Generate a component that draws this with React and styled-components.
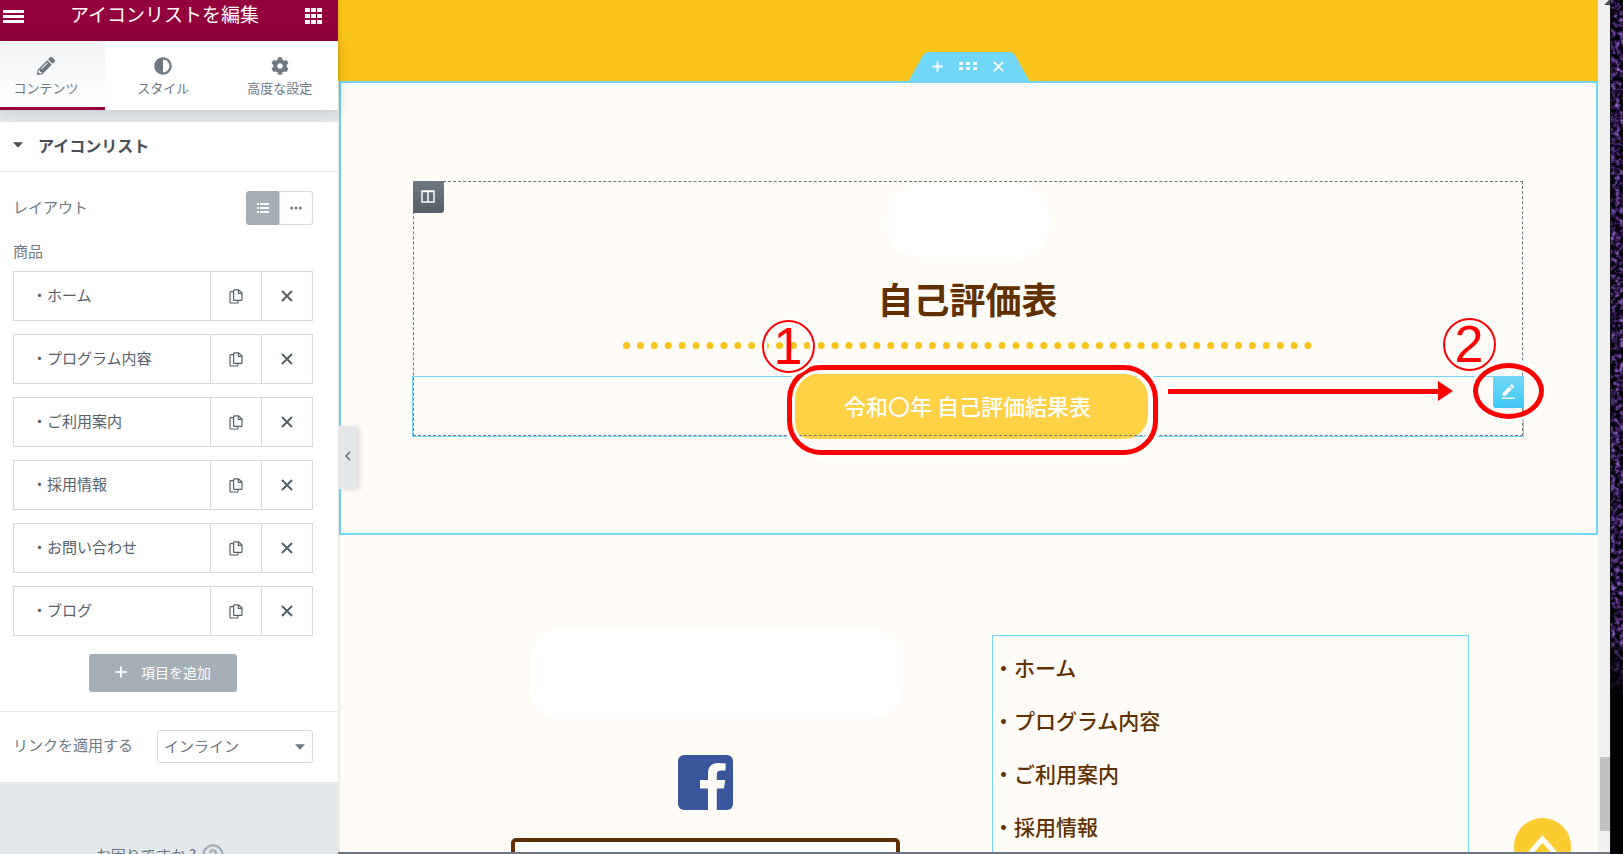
import React from 'react';
import styled, { createGlobalStyle } from 'styled-components';
import { FaPencilAlt, FaAdjust, FaCog } from 'react-icons/fa';


const GlobalStyle = createGlobalStyle`
  * {
    box-sizing: border-box;
  }
  body {
    margin: 0;
    overflow: hidden;
    font-family: "Noto Sans CJK JP", "Noto Sans", sans-serif;
  }
  button, select {
    font-family: inherit;
    padding: 0;
    border: 0;
    background: none;
    cursor: pointer;
  }
  svg {
    display: block;
  }
`;

const Page = styled.div`
  display: flex;
  height: 100vh;
  overflow: hidden;
`;

/* ---------- left panel ---------- */

const Panel = styled.aside`
  position: relative;
  z-index: 2;
  flex: 0 0 338px;
  display: flex;
  flex-direction: column;
  background: #e4e8eb;
  color: #6d7882;
  box-shadow: 0 0 4px rgba(0, 0, 0, 0.2);
`;

const PanelHeader = styled.header`
  flex: none;
  display: flex;
  align-items: flex-start;
  justify-content: space-between;
  height: 41px;
  padding: 0 15px 0 3px;
  background: #93003c;
  color: #fff;
  svg {
    margin-top: 8px;
  }
`;

const HeaderButton = styled.button`
  color: #fff;
`;

const PanelTitle = styled.h1`
  margin: 0;
  font-size: 19px;
  line-height: 28px;
  font-weight: 400;
`;

const Tabs = styled.nav`
  position: relative;
  flex: none;
  display: grid;
  grid-template-columns: 105px 1fr 1fr;
  height: 69px;
  background: #fff;
  box-shadow: 0 2px 14px rgba(0, 0, 0, 0.14);
`;

const Tab = styled.button`
  display: flex;
  flex-direction: column;
  align-items: center;
  gap: 3px;
  padding: 16px ${p => (p.$active ? '13px' : '0')} 0 0;
  border-bottom: ${p => (p.$active ? '3px solid #93003c' : '0')};
  background: ${p => (p.$active ? 'linear-gradient(#f1f3f5, #fff)' : '#fff')};
  color: #6d7882;
  font-size: 13px;
  line-height: 20px;
  font-weight: 400;
`;

const Section = styled.section`
  flex: none;
  margin-top: 12px;
  background: #fff;
`;

const SectionTitle = styled.h2`
  display: flex;
  align-items: center;
  gap: 15px;
  height: 50px;
  margin: 0;
  padding: 0 0 3px 13px;
  border-bottom: 1px solid #e6e9ec;
  color: #495157;
  font-size: 16px;
  font-weight: 700;
`;

const Control = styled.div`
  display: flex;
  align-items: center;
  justify-content: space-between;
  padding: ${p => p.$pad} 25px 0 13px;
  font-size: 15px;
  line-height: 22px;
  font-weight: 400;
  > span, > label {
    padding-bottom: 3px;
  }
`;

const Choices = styled.div`
  display: flex;
`;

const Choice = styled.button`
  display: flex;
  align-items: center;
  justify-content: center;
  width: ${p => (p.$on ? '33px' : '34px')};
  height: 34px;
  border: 1px solid ${p => (p.$on ? '#a4afb7' : '#d5dadf')};
  border-radius: ${p => (p.$on ? '3px 0 0 3px' : '0 3px 3px 0')};
  background: ${p => (p.$on ? '#a4afb7' : '#fff')};
  color: ${p => (p.$on ? '#fff' : '#6d7882')};
`;

const Items = styled.ul`
  display: flex;
  flex-direction: column;
  gap: 13px;
  margin: 9px 25px 0 13px;
  padding: 0;
  list-style: none;
`;

const Item = styled.li`
  display: grid;
  grid-template-columns: 1fr 51px 51px;
  height: 50px;
  border: 1px solid #d5dadf;
`;

const ItemTitle = styled.button`
  padding: 0 0 3px 18px;
  text-align: left;
  color: #556068;
  font-size: 15px;
  font-weight: 400;
`;

const ItemTool = styled.button`
  display: flex;
  align-items: center;
  justify-content: center;
  border-left: 1px solid #d5dadf;
  color: #556068;
`;

const AddButton = styled.button`
  display: flex;
  align-items: center;
  justify-content: center;
  gap: 14px;
  width: 148px;
  height: 38px;
  margin: 18px 0 19px 89px;
  padding-bottom: 2px;
  border-radius: 3px;
  background: #a4afb7;
  color: #fff;
  font-size: 14px;
`;

const Divided = styled.div`
  border-top: 1px solid #e6e9ec;
  padding-bottom: 19px;
`;

const SelectBox = styled.div`
  display: grid;
  align-items: center;
  width: 156px;
  select, svg {
    grid-area: 1 / 1;
  }
  svg {
    justify-self: end;
    margin-right: 8px;
    pointer-events: none;
  }
`;

const Select = styled.select`
  appearance: none;
  height: 33px;
  padding: 0 8px 3px 6px;
  border: 1px solid #d5dadf;
  border-radius: 3px;
  color: #6d7882;
  font-size: 15px;
  font-weight: 400;
`;

const Help = styled.a`
  display: flex;
  justify-content: center;
  align-items: center;
  gap: 6px;
  margin-top: 60px;
  padding-right: 18px;
  color: #6d7882;
  font-size: 15px;
  line-height: 26px;
  text-decoration: none;
  white-space: nowrap;
`;

const Collapse = styled.button`
  position: absolute;
  left: 100%;
  top: calc(50% - 1px);
  display: flex;
  align-items: center;
  justify-content: center;
  width: 19px;
  height: 63px;
  padding-bottom: 4px;
  border-radius: 0 3px 3px 0;
  background: #e4e8eb;
  color: #6d7882;
  box-shadow: 3px 1px 5px rgba(0, 0, 0, 0.12);
`;

/* ---------- preview ---------- */

const Preview = styled.main`
  flex: 1;
  min-width: 0;
  display: flex;
  flex-direction: column;
  position: relative;
  overflow: hidden;
  background: #fffcf7;
  border-bottom: 2px solid #6d7882;
  color: #603000;
`;

const Banner = styled.div`
  flex: none;
  height: 81px;
  background: #fbc41a;
`;

const EditedSection = styled.section`
  position: relative;
  flex: none;
  margin-left: 1px;
  padding: 98px 73px 97px 71px;
  border: 2px solid #71d7f7;
`;

const SectionHandle = styled.div`
  position: absolute;
  left: 50%;
  bottom: calc(100% + 1px);
  width: 122px;
  height: 30px;
  margin-left: -61px;
`;

const HandleButtons = styled.div`
  position: absolute;
  inset: 0;
  display: flex;
  align-items: center;
  justify-content: center;
  gap: 16px;
  padding: 0 2px 2px 0;
  button {
    color: #fff;
  }
`;

const Column = styled.div`
  position: relative;
  display: flex;
  flex-direction: column;
  align-items: center;
  max-width: 1110px;
  margin: 0 auto;
  padding-top: 3px;
  &::after {
    content: '';
    position: absolute;
    inset: 0;
    border: 1px dashed #6d7882;
    pointer-events: none;
  }
`;

const Handle = styled.button`
  position: absolute;
  z-index: 1;
  top: ${p => (p.$blue ? '-1px' : '0')};
  left: ${p => (p.$blue ? 'auto' : '0')};
  right: ${p => (p.$blue ? '-1px' : 'auto')};
  display: flex;
  align-items: center;
  justify-content: center;
  width: 31px;
  height: 32px;
  padding-bottom: 2px;
  border-radius: ${p => (p.$blue ? '0 0 0 3px' : '0 0 3px 0')};
  background: ${p => (p.$blue ? 'linear-gradient(#71d7f7, #3fc8f4)' : 'linear-gradient(#6d7882, #556068)')};
  color: #fff;
`;

const Blank = styled.div`
  width: ${p => p.$w};
  height: ${p => p.$h};
  border-radius: 32px;
  background: #fff;
`;

const Heading = styled.h2`
  margin: 20px 0 0;
  font-size: 36px;
  line-height: 40px;
  font-weight: 700;
`;

const Dots = styled.hr`
  width: 62%;
  height: 0;
  margin: 24px 0 0;
  border: 0;
  border-top: 7px dotted #fbc41a;
`;

const Widget = styled.div`
  position: relative;
  align-self: stretch;
  display: flex;
  align-items: center;
  justify-content: center;
  height: 59px;
  margin-top: 28px;
  outline: 1px solid #71d7f7;
`;

const ResultLink = styled.a`
  position: relative;
  flex: none;
  width: 360px;
  height: 65px;
  border-radius: 24px;
  background: #ffd145;
  color: #fff;
  font-size: 22px;
  line-height: 62px;
  font-weight: 500;
  text-align: center;
  text-decoration: none;
`;

/* red pen marks over the page */

const Ring = styled.span`
  position: absolute;
  z-index: 3;
  inset: ${p => p.$inset};
  border: 5px solid #f00;
  border-radius: ${p => p.$radius};
  box-shadow: 0 0 0 3px #fff, inset 0 0 0 3px ${p => (p.$solid ? 'transparent' : '#fff')};
  pointer-events: none;
`;

const Step = styled.span`
  position: absolute;
  z-index: 4;
  top: ${p => p.$top};
  left: ${p => p.$left || 'auto'};
  right: ${p => p.$right || 'auto'};
  width: 53px;
  height: 53px;
  border: 2px solid #f00;
  border-radius: 50%;
  box-shadow: 0 0 0 3px #fff, inset 0 0 0 3px #fff;
  color: #f00;
  font-family: "Liberation Sans", sans-serif;
  font-size: 52px;
  line-height: 48px;
  font-weight: 400;
  text-align: center;
`;

const Arrow = styled.span`
  position: absolute;
  z-index: 3;
  left: calc(50% + 200px);
  right: 85px;
  top: 12px;
  height: 5px;
  background: #f00;
  box-shadow: 0 0 0 2px #fff;
  &::after {
    content: '';
    position: absolute;
    left: 100%;
    top: -8px;
    border-left: 15px solid #f00;
    border-top: 10px solid transparent;
    border-bottom: 10px solid transparent;
  }
`;

const Footer = styled.footer`
  display: grid;
  grid-template-columns: 389px 477px;
  justify-content: center;
  gap: 92px;
  padding: 93px 0 0 44px;
`;

const Brand = styled.div`
  display: flex;
  flex-direction: column;
  align-items: center;
`;

const FooterLogo = styled(Blank)`
  align-self: flex-end;
  margin-right: -3px;
`;

const Facebook = styled.a`
  margin: 36px 0 28px;
`;

const InfoBox = styled.div`
  align-self: stretch;
  height: 80px;
  border: 4px solid #603000;
  border-radius: 5px;
  background: #fff;
`;

const FooterMenu = styled.ul`
  margin: 7px 0 0;
  padding: 5px 0 0;
  border: 1px solid #71d7f7;
  list-style: none;
  font-size: 21px;
  line-height: 53px;
  font-weight: 500;
  a {
    color: inherit;
    text-decoration: none;
  }
`;

const ToTop = styled.button`
  position: absolute;
  right: 27px;
  bottom: -23px;
  display: flex;
  align-items: flex-start;
  justify-content: center;
  width: 57px;
  height: 57px;
  padding-top: 16px;
  border-radius: 50%;
  background: #fccb30;
`;

/* ---------- right edge ---------- */

const Scrollbar = styled.div`
  flex: 0 0 12px;
  display: flex;
  flex-direction: column;
  justify-content: space-between;
  align-items: flex-end;
  background: #f0f0f0;
  border-bottom: 2px solid #6d7882;
`;

const Thumb = styled.div`
  width: 10px;
  height: 74px;
  margin-bottom: 21px;
  background: #c1c1c1;
`;

const Wallpaper = styled.div`
  flex: 0 0 13px;
  overflow: hidden;
  background: #000;
  border-left: 1px solid #111118;
`;

const menu = ['・ホーム', '・プログラム内容', '・ご利用案内', '・採用情報', '・お問い合わせ', '・ブログ'];

const Cross = ({ size = 12, plus }) => (
  <svg width={size} height={size} viewBox="0 0 12 12" fill="none" stroke="currentColor" strokeWidth="2">
    {plus ? <path d="M6 0.5v11M0.5 6h11" /> : <path d="M1 1l10 10M11 1L1 11" />}
  </svg>
);

const CopyIcon = () => (
  <svg width="14" height="15" viewBox="0 0 14 15" fill="none" stroke="currentColor" strokeWidth="1.2">
    <path d="M4.6 2.6H1.7Q1 2.6 1 3.3V13.3Q1 14 1.7 14H8.3Q9 14 9 13.3V11.4" />
    <path d="M5.3 0.9H9.6L13 4.1V10.7Q13 11.4 12.3 11.4H5.3Q4.6 11.4 4.6 10.7V1.6Q4.6 0.9 5.3 0.9Z" />
    <path d="M9.4 1V4.3H12.8" />
  </svg>
);

const Caret = () => (
  <svg width="10" height="6" viewBox="0 0 10 6" fill="currentColor">
    <path d="M0 0.3H10L5 5.7Z" />
  </svg>
);

function EditorPanel() {
  return (
    <Panel>
      <PanelHeader>
        <HeaderButton aria-label="メニュー">
          <svg width="21" height="16" fill="currentColor"><path d="M0 2h21v3H0zM0 7h21v3H0zM0 12h21v3H0z" /></svg>
        </HeaderButton>
        <PanelTitle>アイコンリストを編集</PanelTitle>
        <HeaderButton aria-label="ウィジェット一覧">
          <svg width="18" height="17" fill="currentColor">
            <path d="M0 0h5v4H0zM6 0h5v4H6zM12 0h5v4h-5zM0 6h5v4H0zM6 6h5v4H6zM12 6h5v4h-5zM0 12h5v4H0zM6 12h5v4H6zM12 12h5v4h-5z" />
          </svg>
        </HeaderButton>
      </PanelHeader>
      <Tabs>
        <Tab $active><FaPencilAlt size={18} />コンテンツ</Tab>
        <Tab><FaAdjust size={18} />スタイル</Tab>
        <Tab><FaCog size={18} />高度な設定</Tab>
      </Tabs>

      <Section>
        <SectionTitle><Caret />アイコンリスト</SectionTitle>
        <Control $pad="19px">
          <span>レイアウト</span>
          <Choices>
            <Choice $on aria-label="デフォルト">
              <svg width="12" height="10" fill="currentColor">
                <path d="M0 0h2v2H0zM3 0h9v2H3zM0 4h2v2H0zM3 4h9v2H3zM0 8h2v2H0zM3 8h9v2H3z" />
              </svg>
            </Choice>
            <Choice aria-label="インライン">
              <svg width="12" height="4" fill="currentColor">
                <circle cx="1.7" cy="2" r="1.5" /><circle cx="6" cy="2" r="1.5" /><circle cx="10.3" cy="2" r="1.5" />
              </svg>
            </Choice>
          </Choices>
        </Control>
        <Control $pad="15px">商品</Control>
        <Items>
          {menu.map(name => (
            <Item key={name}>
              <ItemTitle>{name}</ItemTitle>
              <ItemTool aria-label="複製"><CopyIcon /></ItemTool>
              <ItemTool aria-label="削除"><Cross /></ItemTool>
            </Item>
          ))}
        </Items>
        <AddButton><Cross plus />項目を追加</AddButton>
        <Divided>
          <Control $pad="18px">
            <label htmlFor="link-click">リンクを適用する</label>
            <SelectBox>
              <Select id="link-click" defaultValue="inline">
                <option value="inline">インライン</option>
              </Select>
              <Caret />
            </SelectBox>
          </Control>
        </Divided>
      </Section>

      <Help href="#help">
        お困りですか ?
        <svg width="22" height="22" viewBox="0 0 22 22" fill="none" stroke="#a4afb7" strokeWidth="2.4">
          <circle cx="11" cy="11" r="9.6" />
          <path d="M8 9Q8 6.4 11 6.4T14 9Q14 10.6 11 11.6V13.2M11 14.6V17" />
        </svg>
      </Help>
      <Collapse aria-label="パネルを隠す">
        <svg width="6" height="10" viewBox="0 0 6 10" fill="none" stroke="currentColor" strokeWidth="1.6">
          <path d="M5.2 0.8L1 5L5.2 9.2" />
        </svg>
      </Collapse>
    </Panel>
  );
}

function SitePreview() {
  return (
    <Preview>
      <Banner />
      <EditedSection>
        <SectionHandle>
          <svg width="122" height="30" fill="#71d7f7">
            <path d="M0 30L14.5 4Q17 0 21 0H101Q105 0 107.5 4L122 30Z" />
          </svg>
          <HandleButtons>
            <button aria-label="追加"><Cross plus size={11} /></button>
            <button aria-label="編集">
              <svg width="18" height="9" fill="currentColor">
                <path d="M0 0h4v3H0zM7 0h4v3H7zM14 0h4v3h-4zM0 5h4v3H0zM7 5h4v3H7zM14 5h4v3h-4z" />
              </svg>
            </button>
            <button aria-label="閉じる"><Cross size={11} /></button>
          </HandleButtons>
        </SectionHandle>

        <Column>
          <Handle aria-label="カラム">
            <svg width="14" height="13" fill="none" stroke="currentColor" strokeWidth="1.5">
              <path d="M1 1H13V12H1ZM7 1V12M1 1.5H13" />
            </svg>
          </Handle>
          <Blank $w="162px" $h="74px" />
          <Heading>自己評価表</Heading>
          <Dots />
          <Widget>
            <ResultLink href="#result">
              令和〇年 自己評価結果表
              <Ring $inset="-9px -10px -16px -1px" $radius="34px" />
              <Step $top="-54px" $left="-26px">1</Step>
            </ResultLink>
            <Arrow />
            <Handle $blue aria-label="ウィジェットを編集">
              <svg width="13" height="15" fill="currentColor">
                <path d="M0.500 9.300L7.200 2.600L9.900 5.300L3.200 12H0.500ZM7.900 1.900L9.200 0.600Q9.800 0 10.400 0.600L11.900 2.100Q12.500 2.700 11.900 3.300L10.600 4.600ZM0 13.500H13V14.700H0Z" />
              </svg>
              <Ring $solid $inset="-13px -20px -11px -20px" $radius="50%" />
            </Handle>
            <Step $top="-59px" $right="27px">2</Step>
          </Widget>
        </Column>
      </EditedSection>

      <Footer>
        <Brand>
          <FooterLogo $w="373px" $h="91px" />
          <Facebook href="#facebook" aria-label="Facebook">
            <svg width="55" height="55" viewBox="0 0 55 55">
              <rect width="55" height="55" rx="6" fill="#39569c" />
              <path
                fill="#fffcf7"
                d="M30 55V33.6H22V25H30V18.5C30 12 33.5 8 40.5 8Q45 8 47.6 8.5V15.6H43Q38.8 15.6 38.8 19.5V25H47.2L46 33.6H38.8V55Z"
              />
            </svg>
          </Facebook>
          <InfoBox />
        </Brand>
        <FooterMenu>
          {menu.map(name => (
            <li key={name}><a href="#menu">{name}</a></li>
          ))}
        </FooterMenu>
      </Footer>

      <ToTop aria-label="トップへ戻る">
        <svg width="29" height="20" fill="none" stroke="#fff" strokeWidth="5">
          <path strokeLinecap="round" d="M3.500 17.500L14.500 5L25.500 17.500" />
        </svg>
      </ToTop>
    </Preview>
  );
}

function App() {
  return (
    <>
      <GlobalStyle />
      <Page>
        <EditorPanel />
        <SitePreview />
        <Scrollbar>
          <svg width="6" height="5" fill="#505050"><path d="M0 5L5 0H6V5Z" /></svg>
          <Thumb />
        </Scrollbar>
        <Wallpaper>
          <svg width="12" height="700">
            <defs>
              <filter id="grain" x="0" y="0" width="100%" height="100%" colorInterpolationFilters="sRGB">
                <feTurbulence type="fractalNoise" baseFrequency="0.22" numOctaves="3" seed="4" />
                <feColorMatrix values="1.3 0 0 0 -0.5  1 0 0 0 -0.43  1.6 0 0 0 -0.55  0 0 0 0 1" />
              </filter>
              <linearGradient id="fade" x1="0" y1="0" x2="0" y2="1">
                <stop offset="0.9" stopColor="#000" stopOpacity="0" />
                <stop offset="1" stopColor="#000" />
              </linearGradient>
            </defs>
            <rect width="12" height="700" filter="url(#grain)" />
            <rect width="12" height="700" fill="url(#fade)" />
          </svg>
        </Wallpaper>
      </Page>
    </>
  );
}

export default App;
